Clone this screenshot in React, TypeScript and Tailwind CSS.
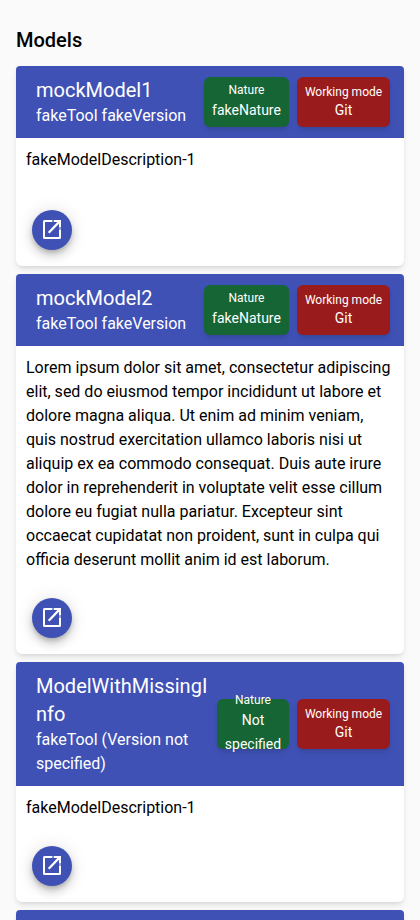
type Model = { name: string; tool: string; nature: string; description: string };

const models: Model[] = [
  { name: 'mockModel1', tool: 'fakeTool fakeVersion', nature: 'fakeNature', description: 'fakeModelDescription-1' },
  {
    name: 'mockModel2',
    tool: 'fakeTool fakeVersion',
    nature: 'fakeNature',
    description:
      'Lorem ipsum dolor sit amet, consectetur adipiscing elit, sed do eiusmod tempor incididunt ut labore et dolore magna aliqua. Ut enim ad minim veniam, quis nostrud exercitation ullamco laboris nisi ut aliquip ex ea commodo consequat. Duis aute irure dolor in reprehenderit in voluptate velit esse cillum dolore eu fugiat nulla pariatur. Excepteur sint occaecat cupidatat non proident, sunt in culpa qui officia deserunt mollit anim id est laborum.',
  },
  { name: 'ModelWithMissingInfo', tool: 'fakeTool (Version not specified)', nature: 'Not specified', description: 'fakeModelDescription-1' },
  { name: '', tool: '', nature: '', description: '' },
];

const cardHeights = ['h-[200px]', 'h-[380px]', 'h-[240px]', 'h-[200px]'];
const headerHeights = ['h-[72px]', 'h-[72px]', 'h-[124px]', 'h-[72px]'];

function Badge({ label, value, className, valueClassName }: { label: string; value: string; className: string; valueClassName: string }) {
  return (
    <div className={`flex h-[50px] shrink-0 flex-col items-center justify-center rounded-md text-center text-white shadow-md ${className}`}>
      <div className="text-xs leading-4 whitespace-nowrap">{label}</div>
      <div className={`text-sm ${valueClassName}`}>{value}</div>
    </div>
  );
}

function ModelCard({ model, index }: { model: Model; index: number }) {
  return (
    <section className={`flex shrink-0 flex-col rounded-t rounded-b-md bg-white shadow-md ${cardHeights[index]}`}>
      <header className={`flex shrink-0 items-center rounded-t bg-[#3f51b5] pr-[14px] pl-5 text-white ${headerHeights[index]}`}>
        {model.name && (
          <>
            <div className="mr-2 min-w-0 flex-1">
              <h2 className="text-xl leading-7 break-words">{model.name}</h2>
              <p className="text-base leading-6">{model.tool}</p>
            </div>
            <div className="flex shrink-0 gap-2">
              <Badge label="Nature" value={model.nature} valueClassName="leading-6" className={index === 2 ? 'w-[72px] bg-[#166534] px-1' : 'w-[85px] bg-[#166534] px-1'} />
              <Badge label="Working mode" value="Git" valueClassName="leading-5" className="w-[93px] bg-[#991b1b]" />
            </div>
          </>
        )}
      </header>
      <div className="flex flex-1 flex-col justify-between px-[10px] pt-[10px] pb-4">
        <p className="text-base leading-6">{model.description}</p>
        <button
          aria-label="Open model"
          className="ml-1.5 flex size-10 items-center justify-center rounded-full bg-[#3f51b5] text-white shadow-[0_3px_5px_-1px_rgba(0,0,0,0.2),0_6px_10px_0_rgba(0,0,0,0.14),0_1px_18px_0_rgba(0,0,0,0.12)]"
        >
          <svg viewBox="0 0 24 24" className="size-6" fill="currentColor">
            <path d="M19 19H5V4h7.4V2H4.5A1.5 1.5 0 0 0 3 3.5v16A1.5 1.5 0 0 0 4.5 21h15a1.5 1.5 0 0 0 1.5-1.5v-8h-2V19zM13.7 2v2h3.7L7.9 13.9l1.6 1.6L19 5.7v3.7h2V2h-7.3z" />
            <path d="M19 10h2v1h-2z" opacity=".45" />
          </svg>
        </button>
      </div>
    </section>
  );
}

export default function App() {
  return (
    <main className="h-screen overflow-hidden bg-[#fafafa] px-4 pt-6 font-[Roboto,sans-serif] text-black">
      <h1 className="mb-[10px] text-xl leading-8 font-medium">Models</h1>
      <div className="flex flex-col gap-2">
        {models.map((model, index) => (
          <ModelCard key={index} model={model} index={index} />
        ))}
      </div>
    </main>
  );
}
